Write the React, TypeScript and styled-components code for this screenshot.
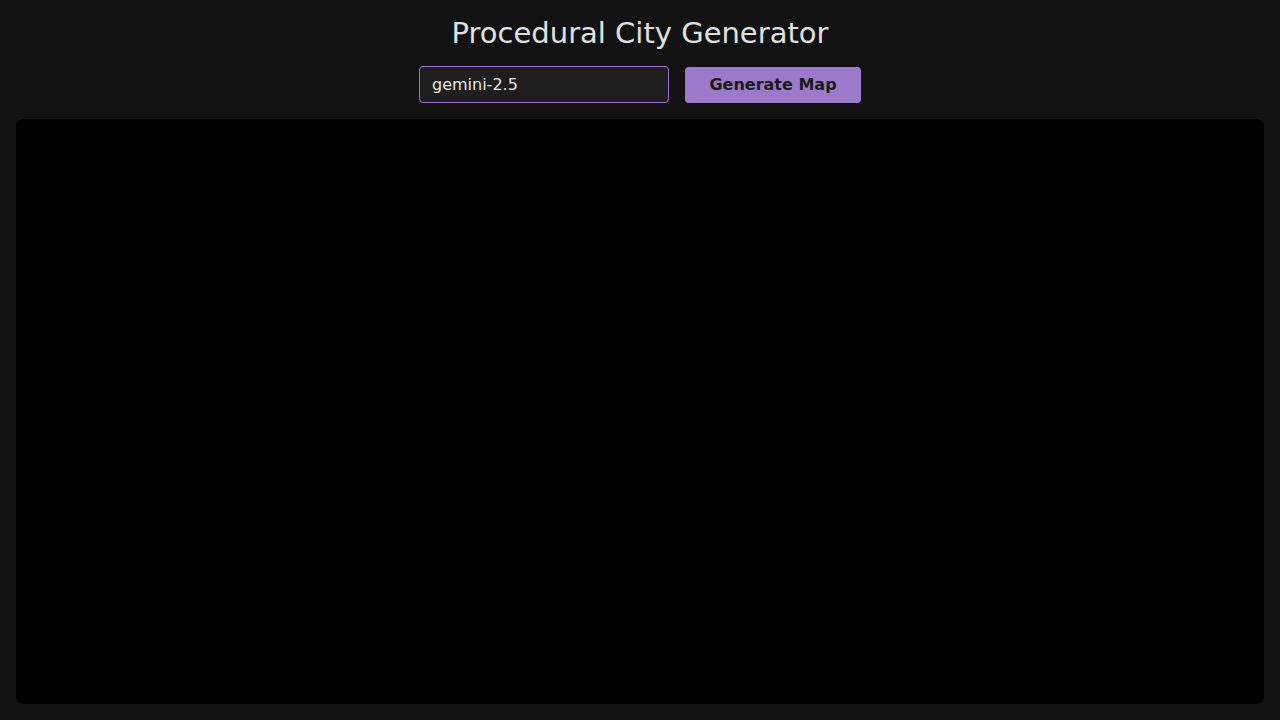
import React from "react";
import styled, { createGlobalStyle } from "styled-components";

const Global = createGlobalStyle`
  html, body { margin: 0; padding: 0; background: #121212; }
  body { font-family: "DejaVu Sans", sans-serif; color: #e0e0e0; }
  * { box-sizing: border-box; }
`;

const Page = styled.div`
  height: 720px;
  padding: 16px;
  display: flex;
  flex-direction: column;
  align-items: center;
`;

const Title = styled.h1`
  margin: 0 0 15px;
  font-size: 29px;
  font-weight: 400;
  line-height: 35px;
  color: #e0e0e0;
`;

const Controls = styled.div`
  display: flex;
  gap: 16px;
  align-items: center;
  margin-bottom: 16px;
`;

const Input = styled.input`
  width: 250px;
  height: 37px;
  padding: 0 12px;
  background: #1e1e1e;
  border: 1px solid #a070d8;
  border-radius: 4px;
  color: #e8e8e8;
  font-family: "DejaVu Sans", sans-serif;
  font-size: 16px;
  outline: none;
`;

const Button = styled.button`
  width: 176px;
  height: 36px;
  background: #9c7acb;
  border: none;
  border-radius: 4px;
  color: #1a1a1a;
  font-family: "DejaVu Sans", sans-serif;
  font-size: 16px;
  font-weight: 700;
  cursor: pointer;
`;

const Canvas = styled.div`
  align-self: stretch;
  flex: 1;
  background: #000;
  border-radius: 8px;
`;

export default function App() {
  return (
    <>
      <Global />
      <Page>
        <Title>Procedural City Generator</Title>
        <Controls>
          <Input defaultValue="gemini-2.5" />
          <Button>Generate Map</Button>
        </Controls>
        <Canvas />
      </Page>
    </>
  );
}
